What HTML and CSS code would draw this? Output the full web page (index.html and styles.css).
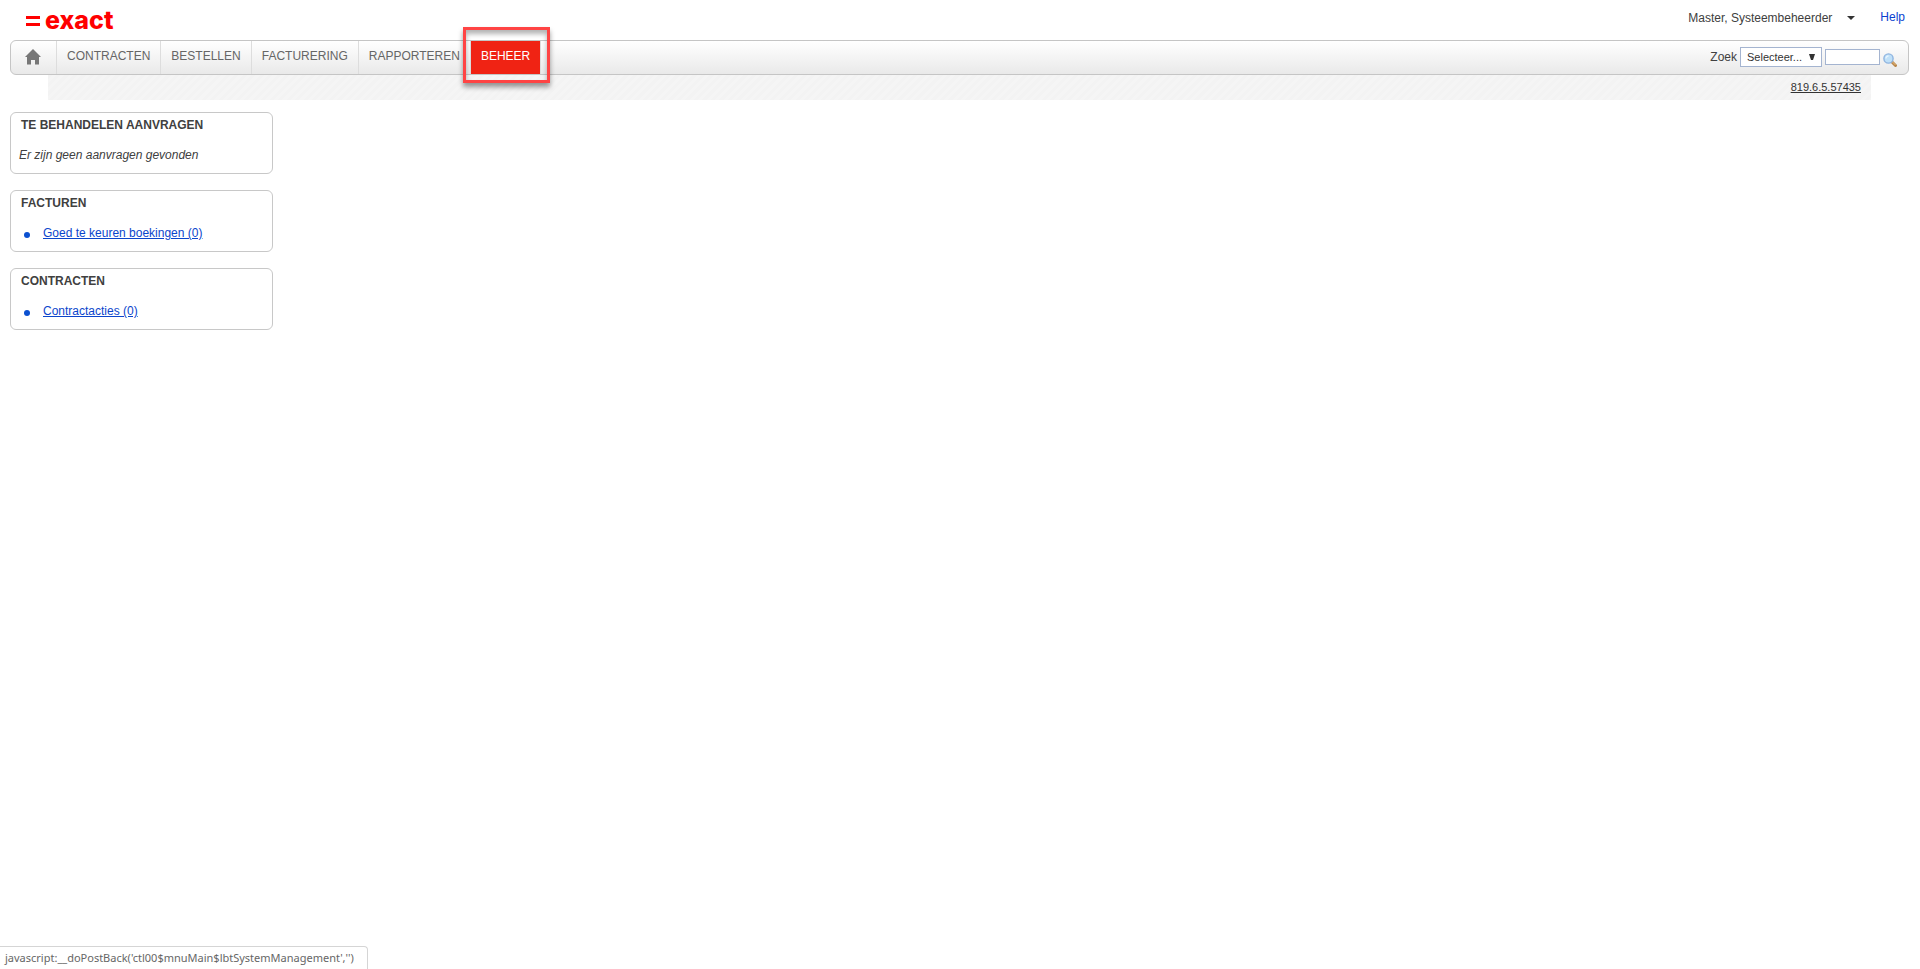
FILE: index.html
```html
<!DOCTYPE html>
<html lang="nl">
<head>
<meta charset="utf-8">
<title>Exact - Beheer</title>
<link rel="stylesheet" href="styles.css">
</head>
<body>
<header class="top">
  <a class="logo" href="#" aria-label="exact">
    <svg class="logo-mark" width="14" height="12" viewBox="0 0 14 12" aria-hidden="true"><path d="M0 1h14v3H0zM0 8h14v3H0z" fill="#f00"/></svg>
    <span>exact</span>
  </a>
  <div class="account">
    <button class="user" type="button">Master, Systeembeheerder
      <svg width="8" height="4" viewBox="0 0 8 4" aria-hidden="true"><path d="M0 0h8L4 4z" fill="#333"/></svg>
    </button>
    <a class="help" href="#">Help</a>
  </div>
</header>
<nav class="menu">
  <a class="home" href="#" aria-label="Home">
    <svg width="16" height="16" viewBox="0 0 16 16" aria-hidden="true"><path d="M8 0l8 8h-2v7.500H10V11H6v4.500H2V8H0z" fill="#777"/></svg>
  </a>
  <a class="item" href="#">CONTRACTEN</a>
  <a class="item" href="#">BESTELLEN</a>
  <a class="item" href="#">FACTURERING</a>
  <a class="item" href="#">RAPPORTEREN</a>
  <div class="marked"><a class="item active" href="#">BEHEER</a></div>
  <form class="search">
    <label for="kind">Zoek</label>
    <span class="picker">
      <select id="kind"><option>Selecteer...</option></select>
      <svg class="arrow" width="6" height="7" viewBox="0 0 6 7" aria-hidden="true"><path d="M0 0h6L4 6H2z" fill="#333"/></svg>
    </span>
    <input class="term" type="text" aria-label="Zoekterm">
    <button class="go" type="button" aria-label="Zoeken">
      <svg width="14" height="14" viewBox="0 0 14 14" aria-hidden="true">
        <path d="M8.500 8.500l4 4" stroke="#b9874c" stroke-width="3" stroke-linecap="round"/>
        <path d="M9.500 9l3 3" stroke="#e8bd7d" stroke-width="1"/>
        <circle cx="5.500" cy="5.500" r="4.600" fill="#bfe0f8" stroke="#8eb4e0" stroke-width="1.400"/>
        <path d="M3 5.500A2.500 2.500 0 0 1 5.500 3" fill="none" stroke="#e6f5ff" stroke-width="1.400"/>
      </svg>
    </button>
  </form>
</nav>
<div class="substrip"><a class="version" href="#">819.6.5.57435</a></div>
<main class="panels">
  <section class="panel">
    <h2>TE BEHANDELEN AANVRAGEN</h2>
    <p class="empty">Er zijn geen aanvragen gevonden</p>
  </section>
  <section class="panel">
    <h2>FACTUREN</h2>
    <ul><li><a href="#">Goed te keuren boekingen (0)</a></li></ul>
  </section>
  <section class="panel">
    <h2>CONTRACTEN</h2>
    <ul><li><a href="#">Contractacties (0)</a></li></ul>
  </section>
</main>
<div class="status">javascript:__doPostBack('ctl00$mnuMain$lbtSystemManagement','')</div>
</body>
</html>
```
FILE: styles.css
```css
* { box-sizing: border-box; }
body {
  margin: 0;
  background: #fff;
  color: #404040;
  font: 12px/16px "Liberation Sans", Arial, sans-serif;
}
button { font: inherit; color: inherit; background: none; border: 0; padding: 0; }
.top {
  display: flex;
  justify-content: space-between;
  height: 40px;
  padding: 0 15px 0 26px;
}
.logo {
  display: flex;
  align-items: center;
  gap: 5px;
  color: #f00;
  text-decoration: none;
  font: 800 25px/38px Inter, "Liberation Sans", sans-serif;
}
.logo-mark { margin-top: 2px; }
.account { display: flex; align-items: flex-start; gap: 25px; padding-top: 9px; }
.user { display: flex; align-items: center; gap: 15px; line-height: 18px; }
.help { color: #0b3fd0; text-decoration: none; }
.menu {
  display: flex;
  height: 35px;
  margin: 0 11px 0 10px;
  border: 1px solid #c5c5c5;
  border-radius: 6px;
  background: linear-gradient(#fff, #e9e9e9);
}
.home {
  display: flex;
  align-items: center;
  justify-content: center;
  width: 46px;
  padding: 0 2px 2px 0;
  border-right: 1px solid #ddd;
}
.item {
  display: block;
  padding: 0 10px;
  border-right: 1px solid #ddd;
  color: #666;
  line-height: 31px;
  text-decoration: none;
}
.marked { position: relative; border-right: 1px solid #ddd; }
.marked::after {
  content: "";
  position: absolute;
  inset: -14px -10px -9px -8px;
  border: 3px solid #ff4444;
  box-shadow: 0 4px 5px rgba(0, 0, 0, .4), inset 0 4px 5px rgba(0, 0, 0, .3);
  pointer-events: none;
}
.active { height: 33px; border: 0; background: #f02314; color: #fff; }
.search { display: flex; align-items: center; margin-left: auto; padding: 0 11px 2px 0; }
.search label { margin-right: 3px; }
.picker { position: relative; display: flex; margin-right: 3px; }
.picker select {
  appearance: none;
  width: 82px;
  height: 20px;
  padding: 0 6px;
  border: 1px solid #a4b4d0;
  border-radius: 0;
  background: #fff;
  color: #333;
  font: 11px/16px "Liberation Sans", Arial, sans-serif;
}
.arrow { position: absolute; right: 7px; top: 7px; pointer-events: none; }
.term {
  width: 55px;
  height: 16px;
  margin-right: 3px;
  padding: 0 2px;
  border: 1px solid #a4b4d0;
  background: #fff;
}
.go { display: flex; padding-top: 7px; }
.substrip {
  height: 25px;
  margin: 0 49px 0 48px;
  padding: 0 10px;
  background: repeating-linear-gradient(135deg, #f3f3f3 0 3px, #f5f5f5 3px 6px);
  font-size: 11px;
  line-height: 24px;
  text-align: right;
}
.version { color: #333; }
.panels {
  display: flex;
  flex-direction: column;
  gap: 16px;
  width: 263px;
  margin: 12px 0 0 10px;
}
.panel { height: 62px; border: 1px solid #c8c8c8; border-radius: 6px; padding: 4px 8px; }
.panel h2 { margin: 0 0 14px 2px; font-size: 12px; line-height: 16px; }
.empty { margin: 0; font-style: italic; }
.panel ul { margin: 0; padding: 0; list-style: none; }
.panel li { display: flex; align-items: center; gap: 13px; padding-left: 5px; }
.panel li::before {
  content: "";
  width: 6px;
  height: 6px;
  margin-top: 3px;
  border-radius: 50%;
  background: #0b50d0;
}
.panel li a { color: #0b45cc; }
.status {
  position: fixed;
  left: 0;
  bottom: 0;
  min-width: 368px;
  padding: 2px 7px 3px 5px;
  border: solid #d5d5d5;
  border-width: 1px 1px 0 0;
  border-radius: 0 4px 0 0;
  background: #fff;
  color: #666;
  font: 11px/17px "Noto Sans", "Open Sans", sans-serif;
}
```
